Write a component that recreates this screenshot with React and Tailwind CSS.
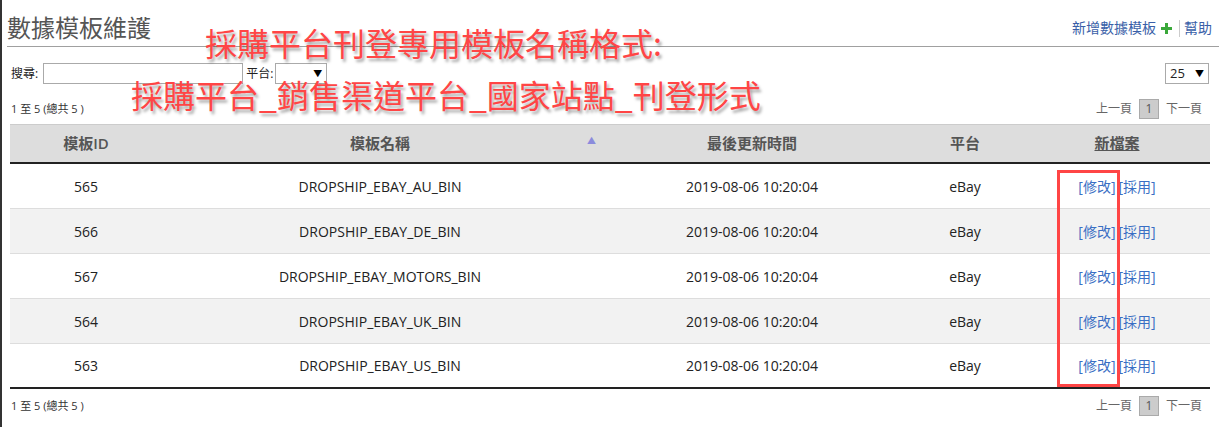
import React from 'react';

const rows = [
  { id: '565', name: 'DROPSHIP_EBAY_AU_BIN' },
  { id: '566', name: 'DROPSHIP_EBAY_DE_BIN' },
  { id: '567', name: 'DROPSHIP_EBAY_MOTORS_BIN' },
  { id: '564', name: 'DROPSHIP_EBAY_UK_BIN' },
  { id: '563', name: 'DROPSHIP_EBAY_US_BIN' },
];

const cols = 'grid grid-cols-[152px_436px_308px_118px_186px]';

function Pager() {
  return (
    <div className="flex items-center gap-[7px] text-[12px] text-[#666]">
      <span>上一頁</span>
      <span className="w-[20px] h-[20px] flex items-center justify-center bg-[#ccc] border border-[#aaa] text-[#555]">1</span>
      <span>下一頁</span>
    </div>
  );
}

function Select({ value, className }) {
  return (
    <div className={`h-[21px] border border-[#aaa] bg-white flex items-center justify-between pl-[4px] pr-[4px] text-[13px] text-[#222] ${className}`}>
      <span>{value}</span>
      <span className="text-[9px] text-black">▼</span>
    </div>
  );
}

export default function App() {
  return (
    <div className="relative w-[1219px] min-h-[427px] bg-white border-l-2 border-[#333] font-['Open_Sans','Noto_Sans_CJK_TC',sans-serif]">
      <div className="ml-[5px] h-[47px] border-b border-[#a0a0a0] flex items-end justify-between pb-[5px] pr-[7px]">
        <h1 className="text-[24px] leading-[28px] text-[#555] font-['Noto_Sans_CJK_TC',sans-serif]">數據模板維護</h1>
        <div className="mb-[3px] flex items-center text-[14px] leading-[20px] text-[#3a5fa8]">
          <span>新增數據模板</span>
          <svg className="ml-[5px] mr-[7px]" width="11" height="11" viewBox="0 0 11 11">
            <path d="M4 0h3v4h4v3H7v4H4V7H0V4h4z" fill="#3aa83a" />
          </svg>
          <span className="w-px h-[17px] bg-[#ccc] mr-[4px]" />
          <span>幫助</span>
        </div>
      </div>

      <div className="pl-[8px]">
        <div className="mt-[16px] h-[21px] flex items-center justify-between pr-[10px]">
          <div className="flex items-center text-[12px] text-[#222]">
            <span className="ml-[1px]">搜尋:</span>
            <div className="ml-[5px] w-[200px] h-[21px] border border-[#aaa] bg-white" />
            <span className="ml-[3px]">平台:</span>
            <Select value="" className="ml-[2px] w-[52px]" />
          </div>
          <Select value="25" className="w-[44px]" />
        </div>

        <div className="mt-[15px] h-[20px] flex items-center justify-between pr-[17px]">
          <span className="ml-[1px] text-[11px] text-[#333]">1 至 5 (總共 5 )</span>
          <Pager />
        </div>

        <div className="mt-[5px] w-[1200px] text-[14px]">
          <div className={`${cols} h-[40px] bg-[#ddd] border-t border-[#ccc] border-b-2 border-b-[#222] text-[15px] font-semibold text-[#555]`}>
            <div className="flex items-center justify-center">模板ID</div>
            <div className="relative flex items-center justify-center">
              模板名稱
              <span className="absolute right-[2px] top-[9px] text-[9px] text-[#8b8bdc]">▲</span>
            </div>
            <div className="flex items-center justify-center">最後更新時間</div>
            <div className="flex items-center justify-center">平台</div>
            <div className="flex items-center justify-center underline">新檔案</div>
          </div>
          {rows.map((r, i) => (
            <div
              key={r.id}
              className={`${cols} h-[45px] text-[#222] ${i % 2 ? 'bg-[#f2f2f2]' : 'bg-white'} ${i === rows.length - 1 ? 'border-b-2 border-[#222]' : 'border-b border-[#ddd]'}`}
            >
              <div className="flex items-center justify-center">{r.id}</div>
              <div className="flex items-center justify-center">{r.name}</div>
              <div className="flex items-center justify-center">2019-08-06 10:20:04</div>
              <div className="flex items-center justify-center">eBay</div>
              <div className="flex items-center justify-center text-[#3a6fc4]">
                <span>[修改]</span>
                <span className="ml-[3px]">[採用]</span>
              </div>
            </div>
          ))}
        </div>

        <div className="mt-[7px] h-[20px] flex items-center justify-between pr-[17px]">
          <span className="ml-[1px] text-[11px] text-[#333]">1 至 5 (總共 5 )</span>
          <Pager />
        </div>
      </div>

      <div className="absolute inset-0 pointer-events-none font-['Noto_Sans_CJK_TC',sans-serif] text-[32px] leading-[40px] text-[#ff4545] [text-shadow:2px_3px_3px_rgba(0,0,0,0.35)]">
        <div className="absolute left-[203px] top-[22px] whitespace-nowrap">採購平台刊登專用模板名稱格式:</div>
        <div className="absolute left-[129px] top-[74px] whitespace-nowrap">採購平台_銷售渠道平台_國家站點_刊登形式</div>
        <div className="absolute left-[1055px] top-[170px] w-[63px] h-[217px] border-[3px] border-[#ff4545] [text-shadow:none]" />
      </div>
    </div>
  );
}
